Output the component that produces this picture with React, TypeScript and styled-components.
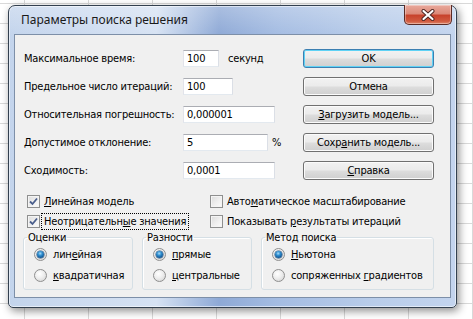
import React from 'react';
import styled, { createGlobalStyle } from 'styled-components';

const GlobalStyle = createGlobalStyle`
  html, body {
    margin: 0;
    padding: 0;
  }
  body {
    width: 473px;
    height: 319px;
    overflow: hidden;
    background-color: #ffffff;
    background-image:
      linear-gradient(to right, #d9d9d9 1px, transparent 1px),
      linear-gradient(to bottom, #d9d9d9 1px, transparent 1px);
    background-size: 64px 20px;
    background-position: 24px 3px;
  }
`;

const Desktop = styled.div`
  padding: 5px 0 0 8px;
`;

const Window = styled.div`
  box-sizing: border-box;
  width: 449px;
  height: 303px;
  display: flex;
  flex-direction: column;
  padding: 0 5px 9px;
  border: 1px solid #33404f;
  border-radius: 7px 7px 5px 5px;
  background:
    linear-gradient(to bottom, rgba(255, 255, 255, 0.25), rgba(255, 255, 255, 0) 30px),
    linear-gradient(to right, #c3d4ec 0%, #d6e2f3 33%, #8ea9d6 47%, #a4bce2 60%, #b9cdea 82%, #c3d4ee 100%);
  box-shadow: inset 0 0 0 1px rgba(255, 255, 255, 0.55), 2px 3px 9px rgba(0, 0, 0, 0.45);
`;

const TitleBar = styled.div`
  height: 28px;
  display: flex;
  align-items: flex-start;
  justify-content: space-between;
  margin-right: -1px;
`;

const Title = styled.div`
  padding: 6px 0 0 7px;
  font-family: "Noto Sans", "Liberation Sans", sans-serif;
  font-size: 12px;
  line-height: 16px;
  color: #1a1a1a;
`;

const CloseButton = styled.div`
  box-sizing: border-box;
  width: 48px;
  height: 20px;
  margin-top: -1px;
  display: flex;
  align-items: center;
  justify-content: center;
  border: 1px solid #5a2a24;
  border-top: none;
  border-radius: 0 0 5px 5px;
  background: linear-gradient(to bottom, #e9a99c 0%, #dc8a79 45%, #c8432c 55%, #d05a3f 85%, #e0886c 100%);
  box-shadow: inset 0 0 0 1px rgba(255, 255, 255, 0.35);
`;

const Client = styled.div`
  flex: 1;
  display: flex;
  flex-direction: column;
  border: 1px solid #7d8fa8;
  background: #f0f0f0;
  padding: 14px 0 0 9px;
  font-family: "DejaVu Sans Condensed", "Liberation Sans", sans-serif;
  font-size: 11px;
  letter-spacing: -0.2px;
  color: #000;
`;

const TopSection = styled.div`
  display: grid;
  grid-template-columns: 279px 131px;
`;

const Fields = styled.div`
  display: flex;
  flex-direction: column;
  gap: 9px;
`;

const FieldRow = styled.div`
  height: 19px;
  display: flex;
  align-items: center;
`;

const FieldLabel = styled.span`
  width: 159px;
  flex: none;
`;

const TextBox = styled.div<{ $w: number }>`
  box-sizing: border-box;
  width: ${p => p.$w}px;
  height: 17px;
  padding: 0 3px;
  display: flex;
  align-items: center;
  background: #fff;
  border: 1px solid #abadb3;
  border-color: #abadb3 #dbdfe6 #e3e9ef #e2e3ea;
`;

const Suffix = styled.span<{ $gap: number }>`
  margin-left: ${p => p.$gap}px;
`;

const Buttons = styled.div`
  display: flex;
  flex-direction: column;
  gap: 9px;
`;

const Button = styled.div<{ $default?: boolean }>`
  box-sizing: border-box;
  height: 19px;
  display: flex;
  align-items: center;
  justify-content: center;
  border: 1px solid ${p => (p.$default ? '#3c7fb1' : '#707070')};
  border-radius: 3px;
  background: linear-gradient(to bottom, #f2f2f2 0%, #ebebeb 48%, #dddddd 52%, #cfcfcf 100%);
  box-shadow: inset 0 0 0 1px ${p => (p.$default ? '#5fd2f5' : '#fbfbfb')};
`;

const Checks = styled.div`
  display: grid;
  grid-template-columns: 183px 1fr;
  grid-auto-rows: 20px;
  margin-top: 11px;
`;

const CheckItem = styled.div`
  display: flex;
  align-items: center;
  padding-left: 3px;
`;

const Box = styled.span`
  box-sizing: border-box;
  width: 13px;
  height: 13px;
  flex: none;
  border: 1px solid #8e8f8f;
  background: linear-gradient(135deg, #dcdcdc 0%, #f1f1f1 60%, #fbfbfb 100%);
  box-shadow: inset 0 0 0 1px #f4f4f4;
  display: flex;
  align-items: center;
  justify-content: center;
`;

const ItemText = styled.span<{ $focus?: boolean }>`
  margin-left: 1px;
  padding: 1px 2px;
  border: 1px dotted ${p => (p.$focus ? '#000' : 'transparent')};
  line-height: 13px;
`;

const Groups = styled.div`
  display: flex;
  gap: 9px;
  margin-left: -1px;
`;

const GroupBox = styled.fieldset<{ $w: number }>`
  box-sizing: border-box;
  width: ${p => p.$w}px;
  margin: 0;
  padding: 0 0 3px;
  border: 1px solid #d5dfe5;
  border-radius: 3px;
  box-shadow: inset 1px 1px 0 #fff;
  min-inline-size: 0;
`;

const Legend = styled.legend`
  margin-left: 3px;
  padding: 0 1px;
  line-height: 13px;
`;

const RadioRow = styled.div`
  height: 21px;
  display: flex;
  align-items: center;
  padding-left: 10px;
`;

const RadioCircle = styled.span<{ $on?: boolean }>`
  box-sizing: border-box;
  width: 13px;
  height: 13px;
  flex: none;
  border-radius: 50%;
  border: 1px solid #8f8f8f;
  background: radial-gradient(circle at 40% 35%, #ffffff 0%, #eeeeee 45%, #cfcfcf 100%);
  display: flex;
  align-items: center;
  justify-content: center;
  margin-right: 2px;
  &::after {
    content: '';
    display: ${p => (p.$on ? 'block' : 'none')};
    width: 7px;
    height: 7px;
    border-radius: 50%;
    background: radial-gradient(circle at 45% 35%, #a9dcfa 0%, #2f8fd0 35%, #0f5290 75%, #0b3763 100%);
    box-shadow: 0 0 0 0.5px #244f78;
  }
`;

const Check = () => (
  <svg width="9" height="9" viewBox="0 0 9 9">
    <path d="M1 4.5 L3.5 7 L8 1.5" fill="none" stroke="#4a5e8c" strokeWidth="1.8" />
  </svg>
);

const CloseX = () => (
  <svg width="14" height="12" viewBox="0 0 14 12">
    <path d="M2.5 2 L11.5 10 M11.5 2 L2.5 10" stroke="#4a2320" strokeWidth="4" strokeLinecap="round" />
    <path d="M2.5 2 L11.5 10 M11.5 2 L2.5 10" stroke="#ffffff" strokeWidth="2.2" strokeLinecap="round" />
  </svg>
);

const CheckBox: React.FC<{ checked?: boolean; focus?: boolean; children: React.ReactNode }> = ({ checked, focus, children }) => (
  <CheckItem>
    <Box>{checked && <Check />}</Box>
    <ItemText $focus={focus}>{children}</ItemText>
  </CheckItem>
);

const Radio: React.FC<{ on?: boolean; children: React.ReactNode }> = ({ on, children }) => (
  <RadioRow>
    <RadioCircle $on={on} />
    <ItemText>{children}</ItemText>
  </RadioRow>
);

const fields = [
  { label: 'Максимальное время:', value: '100', w: 36, suffix: 'секунд', gap: 9 },
  { label: 'Предельное число итераций:', value: '100', w: 50 },
  { label: 'Относительная погрешность:', value: '0,000001', w: 92 },
  { label: 'Допустимое отклонение:', value: '5', w: 85, suffix: '%', gap: 4 },
  { label: 'Сходимость:', value: '0,0001', w: 92 },
];

export default function App() {
  return (
    <>
      <GlobalStyle />
      <Desktop>
        <Window>
          <TitleBar>
            <Title>Параметры поиска решения</Title>
            <CloseButton><CloseX /></CloseButton>
          </TitleBar>
          <Client>
            <TopSection>
              <Fields>
                {fields.map(f => (
                  <FieldRow key={f.label}>
                    <FieldLabel>{f.label}</FieldLabel>
                    <TextBox $w={f.w}>{f.value}</TextBox>
                    {f.suffix && <Suffix $gap={f.gap!}>{f.suffix}</Suffix>}
                  </FieldRow>
                ))}
              </Fields>
              <Buttons>
                <Button $default>OK</Button>
                <Button>Отмена</Button>
                <Button><span><u>З</u>агрузить модель...</span></Button>
                <Button><span>Сохр<u>а</u>нить модель...</span></Button>
                <Button><span><u>С</u>правка</span></Button>
              </Buttons>
            </TopSection>
            <Checks>
              <CheckBox checked><u>Л</u>инейная модель</CheckBox>
              <CheckBox>Авто<u>м</u>атическое масштабирование</CheckBox>
              <CheckBox checked focus>Неотрицательн<u>ы</u>е значения</CheckBox>
              <CheckBox>Показывать <u>р</u>езультаты итераций</CheckBox>
            </Checks>
            <Groups>
              <GroupBox $w={110}>
                <Legend>Оценки</Legend>
                <Radio on>лин<u>е</u>йная</Radio>
                <Radio><u>к</u>вадратичная</Radio>
              </GroupBox>
              <GroupBox $w={110}>
                <Legend>Разности</Legend>
                <Radio on><u>п</u>рямые</Radio>
                <Radio><u>ц</u>ентральные</Radio>
              </GroupBox>
              <GroupBox $w={173}>
                <Legend>Метод поиска</Legend>
                <Radio on><u>Н</u>ьютона</Radio>
                <Radio>сопряженных <u>г</u>радиентов</Radio>
              </GroupBox>
            </Groups>
          </Client>
        </Window>
      </Desktop>
    </>
  );
}
